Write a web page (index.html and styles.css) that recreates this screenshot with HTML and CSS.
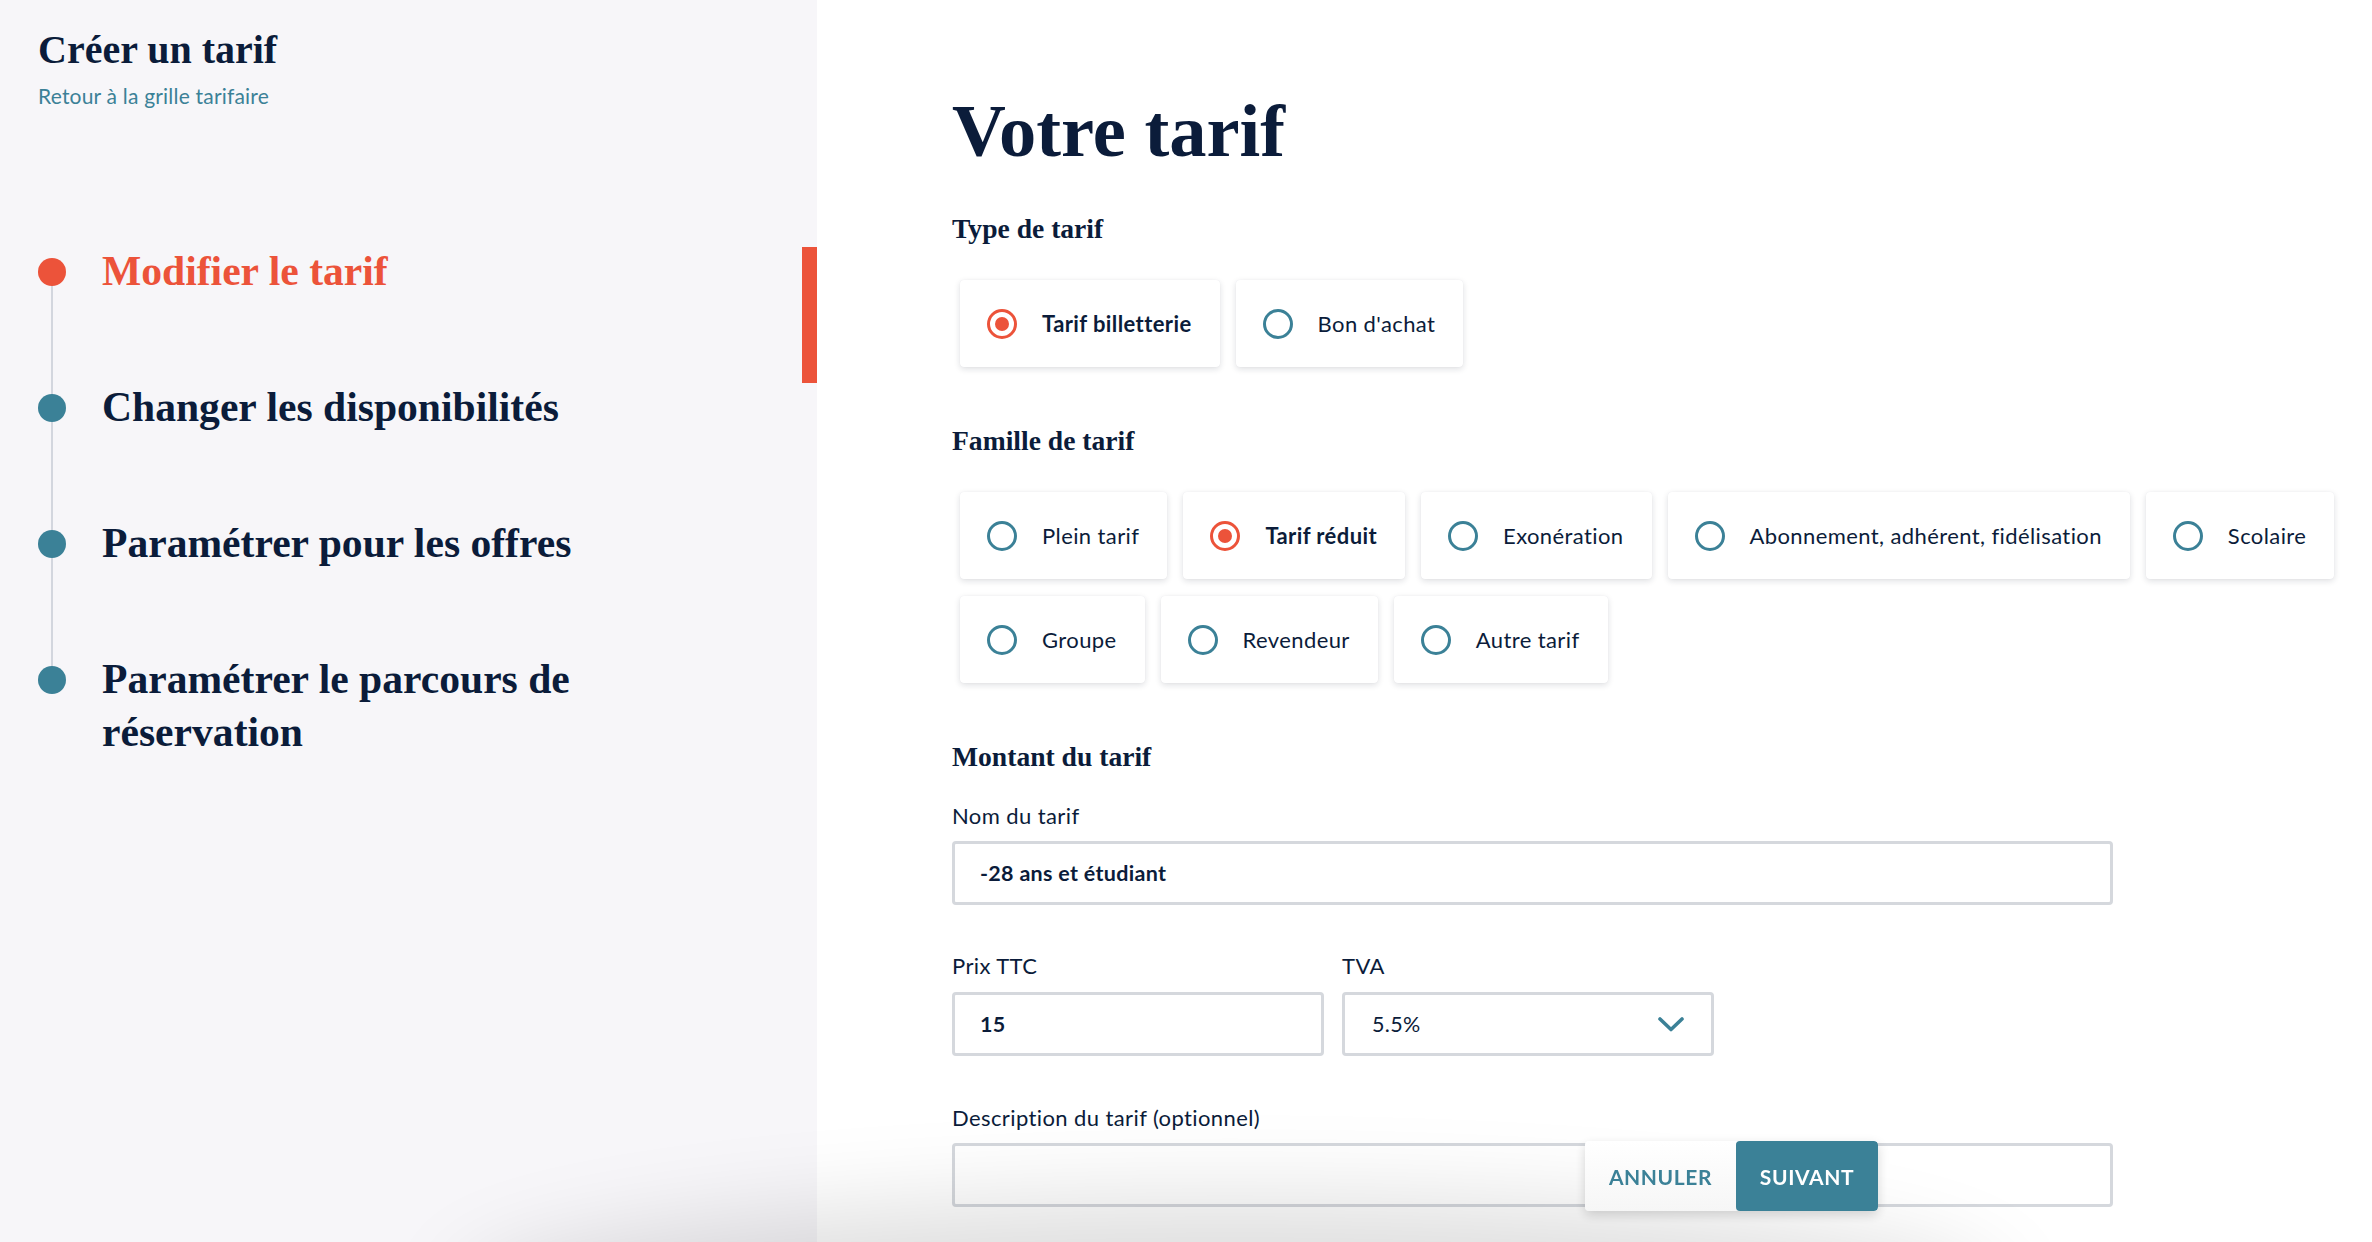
FILE: index.html
```html
<!DOCTYPE html>
<html lang="fr">
<head>
<meta charset="utf-8">
<title>Créer un tarif</title>
<link rel="stylesheet" href="styles.css">
</head>
<body>
<div class="app">
  <aside class="sidebar">
    <h2 class="side-title">Créer un tarif</h2>
    <a class="back-link" href="#">Retour à la grille tarifaire</a>
    <ol class="steps">
      <li class="step active"><span class="dot"></span><span class="step-label">Modifier le tarif</span></li>
      <li class="step"><span class="dot"></span><span class="step-label">Changer les disponibilités</span></li>
      <li class="step"><span class="dot"></span><span class="step-label">Paramétrer pour les offres</span></li>
      <li class="step"><span class="dot"></span><span class="step-label">Paramétrer le parcours de réservation</span></li>
    </ol>
  </aside>
  <main class="main">
    <h1 class="page-title">Votre tarif</h1>

    <section class="section section-type">
      <h3 class="section-title">Type de tarif</h3>
      <div class="options">
        <div class="option selected"><span class="radio"></span><span class="option-label">Tarif billetterie</span></div>
        <div class="option"><span class="radio"></span><span class="option-label">Bon d'achat</span></div>
      </div>
    </section>

    <section class="section section-gap">
      <h3 class="section-title">Famille de tarif</h3>
      <div class="options">
        <div class="option"><span class="radio"></span><span class="option-label">Plein tarif</span></div>
        <div class="option selected"><span class="radio"></span><span class="option-label">Tarif réduit</span></div>
        <div class="option"><span class="radio"></span><span class="option-label">Exonération</span></div>
        <div class="option"><span class="radio"></span><span class="option-label">Abonnement, adhérent, fidélisation</span></div>
        <div class="option"><span class="radio"></span><span class="option-label">Scolaire</span></div>
        <div class="option"><span class="radio"></span><span class="option-label">Groupe</span></div>
        <div class="option"><span class="radio"></span><span class="option-label">Revendeur</span></div>
        <div class="option"><span class="radio"></span><span class="option-label">Autre tarif</span></div>
      </div>
    </section>

    <section class="section section-gap">
      <h3 class="section-title">Montant du tarif</h3>
      <div class="field field-first">
        <label class="field-label">Nom du tarif</label>
        <div class="input input-wide input-strong">-28 ans et étudiant</div>
      </div>
      <div class="field-row">
        <div class="field">
          <label class="field-label">Prix TTC</label>
          <div class="input input-strong">15</div>
        </div>
        <div class="field">
          <label class="field-label">TVA</label>
          <div class="input select">
            <span>5.5%</span>
            <svg class="chevron" width="26" height="15" viewBox="0 0 26 15"><polyline points="2,2 13,12.5 24,2" fill="none" stroke="#3b8197" stroke-width="3.6" stroke-linecap="round" stroke-linejoin="round"/></svg>
          </div>
        </div>
      </div>
      <div class="field field-desc">
        <label class="field-label">Description du tarif (optionnel)</label>
        <div class="input input-wide"></div>
      </div>
    </section>
  </main>
</div>
<div class="bottom-shade"></div>
<div class="actions">
  <button class="btn btn-cancel">ANNULER</button>
  <button class="btn btn-next">SUIVANT</button>
</div>
</body>
</html>
```

FILE: styles.css
```css
html, body {
  margin: 0;
  padding: 0;
  height: 100%;
  overflow: hidden;
  background: #ffffff;
}

body {
  font-family: Lato, "Noto Sans", sans-serif;
  color: #0b1c3a;
}

.app {
  display: flex;
  height: 100vh;
}

.sidebar {
  width: 817px;
  flex-shrink: 0;
  box-sizing: border-box;
  background: #f7f6f9;
  padding: 26px 0 0 38px;
}

.side-title {
  margin: 0;
  font-family: "Liberation Serif", "DejaVu Serif", serif;
  font-weight: 700;
  font-size: 40px;
  line-height: 48px;
  color: #0b1c3a;
}

.back-link {
  display: block;
  margin-top: 10px;
  font-size: 21px;
  line-height: 24px;
  letter-spacing: 0.2px;
  color: #3b8197;
  text-decoration: none;
}

.steps {
  list-style: none;
  margin: 137px 0 0;
  padding: 0;
}

.step {
  position: relative;
  display: flex;
  align-items: flex-start;
  padding-bottom: 83px;
}

.step:not(:last-child)::before {
  content: "";
  position: absolute;
  left: 13px;
  top: 27px;
  width: 2px;
  height: 136px;
  background: #d3d6de;
}

.dot {
  position: relative;
  z-index: 1;
  flex-shrink: 0;
  width: 28px;
  height: 28px;
  margin-top: 13px;
  border-radius: 50%;
  background: #3b8197;
}

.step-label {
  margin-left: 36px;
  max-width: 560px;
  font-family: "Liberation Serif", "DejaVu Serif", serif;
  font-weight: 700;
  font-size: 41.6px;
  line-height: 53px;
  color: #0b1c3a;
}

.step.active .dot {
  background: #ec533a;
}

.step.active .step-label {
  color: #ec533a;
}

.step.active::after {
  content: "";
  position: absolute;
  right: 0;
  top: 2px;
  width: 15px;
  height: 136px;
  background: #ec533a;
}

.main {
  flex: 1;
  min-width: 0;
  box-sizing: border-box;
  padding: 87px 0 0 135px;
  background: #ffffff;
}

.page-title {
  margin: 0;
  font-family: "Liberation Serif", "DejaVu Serif", serif;
  font-weight: 700;
  font-size: 74.5px;
  line-height: 89px;
  color: #0b1c3a;
}

.section-type {
  margin-top: 37px;
}

.section-gap {
  margin-top: 58px;
}

.section-title {
  margin: 0;
  font-family: "Liberation Serif", "DejaVu Serif", serif;
  font-weight: 700;
  font-size: 27.6px;
  line-height: 32px;
  color: #0b1c3a;
}

.options {
  display: flex;
  flex-wrap: wrap;
  column-gap: 16px;
  row-gap: 17px;
  margin-top: 35px;
  padding-left: 8px;
}

.option {
  display: flex;
  align-items: center;
  box-sizing: border-box;
  height: 87px;
  padding: 0 28px 0 27px;
  background: #ffffff;
  border-radius: 4px;
  box-shadow: 0 2px 6px rgba(20, 30, 50, 0.14), 0 0 1px rgba(20, 30, 50, 0.08);
}

.radio {
  display: flex;
  align-items: center;
  justify-content: center;
  flex-shrink: 0;
  box-sizing: border-box;
  width: 30px;
  height: 30px;
  margin-right: 25px;
  border: 3px solid #3b8197;
  border-radius: 50%;
}

.option-label {
  font-size: 22px;
  line-height: 25px;
  letter-spacing: 0.4px;
  color: #0b1c3a;
  white-space: nowrap;
}

.option.selected .radio {
  border-color: #ec533a;
}

.option.selected .radio::after {
  content: "";
  width: 14px;
  height: 14px;
  border-radius: 50%;
  background: #ec533a;
}

.option.selected .option-label {
  font-weight: 700;
}

.field-first {
  margin-top: 30px;
}

.field-label {
  display: block;
  font-size: 22px;
  line-height: 25px;
  letter-spacing: 0.4px;
  color: #0b1c3a;
  margin-bottom: 13px;
}

.input {
  display: flex;
  align-items: center;
  box-sizing: border-box;
  height: 64px;
  padding: 0 25px;
  border: 3px solid #d5d8dd;
  border-radius: 4px;
  background: #ffffff;
  font-size: 21.5px;
  letter-spacing: 0.3px;
  color: #0b1c3a;
}

.input-wide {
  width: 1161px;
}

.input-strong {
  font-weight: 700;
}

.field-row {
  display: grid;
  grid-template-columns: 372px 372px;
  column-gap: 18px;
  margin-top: 48px;
}

.field-row .field-label {
  margin-bottom: 14px;
}

.select {
  justify-content: space-between;
  padding: 0 27px 0 27px;
}

.chevron {
  display: block;
}

.field-desc {
  margin-top: 49px;
}

.bottom-shade {
  position: fixed;
  left: 500px;
  width: 1460px;
  top: 100%;
  height: 120px;
  border-radius: 50%;
  background: rgba(0, 0, 0, 0.12);
  box-shadow: 0 0 90px 45px rgba(0, 0, 0, 0.13);
}

.actions {
  position: fixed;
  left: 1585px;
  top: 1141px;
  display: flex;
  border-radius: 4px;
  overflow: hidden;
  box-shadow: 0 4px 12px rgba(0, 0, 0, 0.16);
}

.btn {
  height: 70px;
  border: none;
  margin: 0;
  padding: 0;
  font-family: Lato, "Noto Sans", sans-serif;
  font-weight: 700;
  font-size: 21px;
  letter-spacing: 0.6px;
}

.btn-cancel {
  width: 151px;
  background: linear-gradient(#ffffff, #f6f6f6);
  color: #3b8197;
}

.btn-next {
  width: 142px;
  background: #3b8197;
  color: #ffffff;
  border-radius: 4px;
}
```
